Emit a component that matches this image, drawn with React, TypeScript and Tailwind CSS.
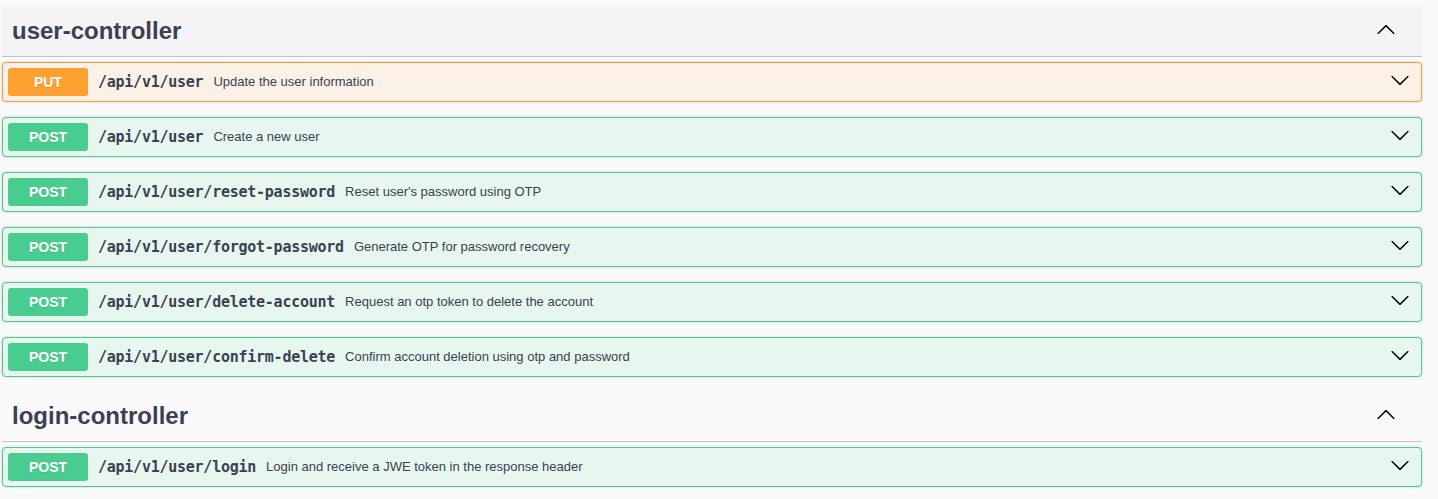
import React from "react";

type Op = { method: "PUT" | "POST"; path: string; desc: string };

const userOps: Op[] = [
  { method: "PUT", path: "/api/v1/user", desc: "Update the user information" },
  { method: "POST", path: "/api/v1/user", desc: "Create a new user" },
  { method: "POST", path: "/api/v1/user/reset-password", desc: "Reset user's password using OTP" },
  { method: "POST", path: "/api/v1/user/forgot-password", desc: "Generate OTP for password recovery" },
  { method: "POST", path: "/api/v1/user/delete-account", desc: "Request an otp token to delete the account" },
  { method: "POST", path: "/api/v1/user/confirm-delete", desc: "Confirm account deletion using otp and password" },
];

const loginOps: Op[] = [
  { method: "POST", path: "/api/v1/user/login", desc: "Login and receive a JWE token in the response header" },
];

function ChevronDown() {
  return (
    <svg width="20" height="20" viewBox="0 0 20 20" className="mb-[4px]" fill="#000">
      <path d="M17.418 6.109c.272-.268.709-.268.979 0s.271.701 0 .969l-7.908 7.83c-.27.268-.707.268-.979 0l-7.908-7.83c-.27-.268-.27-.701 0-.969.271-.268.709-.268.979 0L10 13.25l7.418-7.141z" />
    </svg>
  );
}

function ChevronUp() {
  return (
    <svg width="20" height="20" viewBox="0 0 20 20" className="mb-[5px]" fill="#000">
      <path d="M17.418 14.908c.272.268.709.268.979 0s.271-.701 0-.969l-7.908-7.83c-.27-.268-.707-.268-.979 0l-7.908 7.83c-.27.268-.27.701 0 .969.271.268.709.268.979 0L10 7.767l7.418 7.141z" />
    </svg>
  );
}

function OpBlock({ op, last }: { op: Op; last: boolean }) {
  const put = op.method === "PUT";
  return (
    <div
      className={`flex items-center h-[40px] border rounded-[4px] p-[5px] shadow-[0_0_3px_rgba(0,0,0,0.19)] ${
        put ? "border-[#fca130] bg-[#fbf1e6]" : "border-[#49cc90] bg-[#e8f6f0]"
      } ${last ? "mb-[14px]" : "mb-[15px]"}`}
    >
      <div
        className={`w-[80px] h-[28px] shrink-0 flex items-center justify-center rounded-[3px] text-white text-[14px] font-bold [text-shadow:0_1px_0_rgba(0,0,0,0.1)] ${
          put ? "bg-[#fca130]" : "bg-[#49cc90]"
        }`}
        style={{ fontFamily: '"Liberation Sans", Arial, sans-serif' }}
      >
        {op.method}
      </div>
      <span
        className="px-[10px] text-[15px] font-bold tracking-[-0.25px] text-[#3b4151] whitespace-nowrap"
        style={{ fontFamily: '"DejaVu Sans Mono", monospace' }}
      >
        {op.path}
      </span>
      <span
        className="flex-1 text-[13px] text-[#3b4151] whitespace-nowrap"
        style={{ fontFamily: '"Liberation Sans", Arial, sans-serif' }}
      >
        {op.desc}
      </span>
      <div className="mr-[6px] flex items-center">
        <ChevronDown />
      </div>
    </div>
  );
}

function Section({ title, ops, hover }: { title: string; ops: Op[]; hover?: boolean }) {
  return (
    <div>
      <div
        className={`flex items-center h-[51px] border-b border-[#c1c2c7] pl-[10px] pr-[20px] mb-[5px] ${
          hover ? "bg-[#f4f4f4]" : ""
        }`}
      >
        <h3
          className="flex-1 text-[24px] font-bold text-[#3b4151]"
          style={{ fontFamily: '"Liberation Sans", Arial, sans-serif' }}
        >
          {title}
        </h3>
        <div className="mr-[6px] flex items-center">
          <ChevronUp />
        </div>
      </div>
      {ops.map((op, i) => (
        <OpBlock key={i} op={op} last={i === ops.length - 1} />
      ))}
    </div>
  );
}

export default function App() {
  return (
    <div className="w-[1438px] h-[499px] overflow-hidden bg-[#fafafa]">
      <div className="ml-[2px] w-[1420px] pt-[6px]">
        <Section title="user-controller" ops={userOps} hover />
        <Section title="login-controller" ops={loginOps} />
      </div>
    </div>
  );
}
